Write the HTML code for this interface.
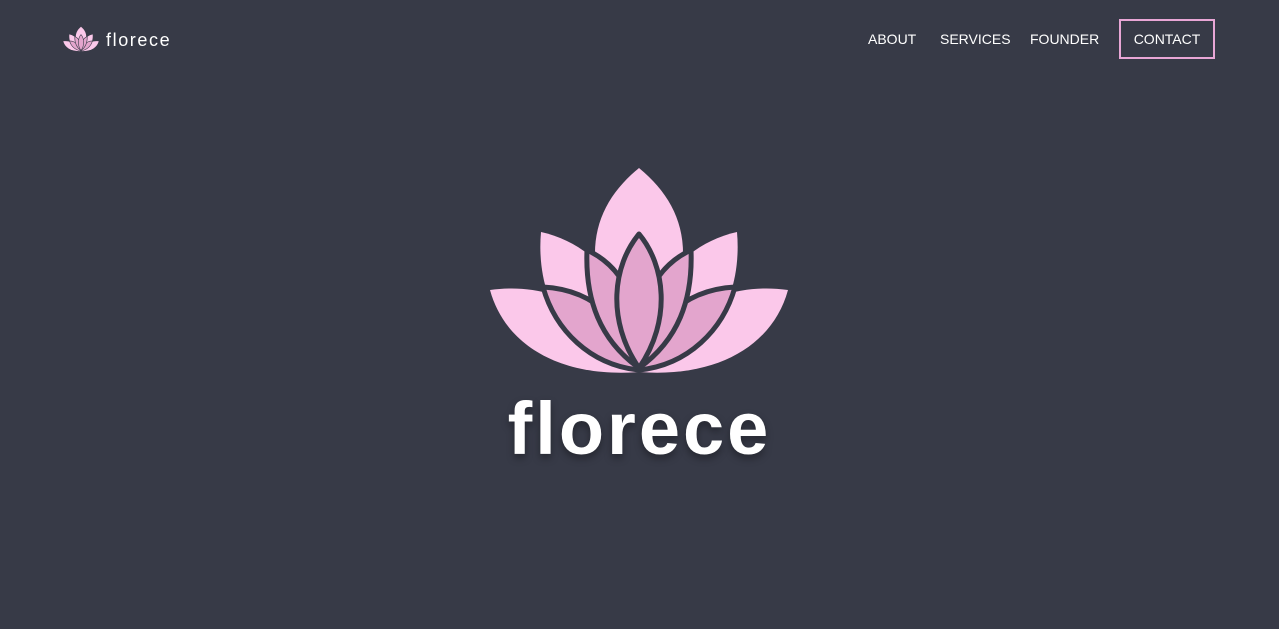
<!DOCTYPE html>
<html><head><meta charset="utf-8"><style>
html,body{margin:0;padding:0;width:1279px;height:629px;overflow:hidden;background:#373a47;font-family:"Liberation Sans",sans-serif;color:#fff}
.logo{position:absolute;left:63px;top:26px;display:flex;align-items:center}
.logo span{font-size:18px;letter-spacing:1.6px;margin-left:7px;margin-top:3px}
nav a{position:absolute;top:31px;font-size:14px;color:#fff;text-decoration:none}
.contact{position:absolute;left:1119px;top:19px;width:92px;height:36px;border:2px solid #e8a6d6;font-size:14px;text-align:center;line-height:37px}
.big{position:absolute;left:0;width:1279px;top:386px;text-align:center;font-size:74px;font-weight:bold;letter-spacing:3px;text-shadow:0 4px 8px rgba(0,0,0,.35)}
</style></head><body>
<svg width="0" height="0" style="position:absolute"><defs>
<g id="lotus">
<path fill="#fbc8ea" d="M639,168 C690,210 705,270 639,372 C573,270 588,210 639,168Z"/>
<path fill="#fbc8ea" d="M541,232 C600,245 640,300 639,372 C570,360 535,300 541,232Z"/>
<path fill="#fbc8ea" d="M737,232 C678,245 638,300 639,372 C708,360 743,300 737,232Z"/>
<path fill="#fbc8ea" d="M490,290 C560,280 620,320 639,372 C560,378 505,345 490,290Z"/>
<path fill="#fbc8ea" d="M788,290 C718,280 658,320 639,372 C718,378 773,345 788,290Z"/>
<g fill="#e3a5cd" stroke="#373a47" stroke-width="5" stroke-linejoin="round">
<path d="M543,287 C600,290 630,330 639,370 C590,365 555,330 543,287Z"/>
<path d="M735,287 C678,290 648,330 639,370 C688,365 723,330 735,287Z"/>
<path d="M587,250 C630,270 645,320 639,368 C600,340 585,300 587,250Z"/>
<path d="M691,250 C648,270 633,320 639,368 C678,340 693,300 691,250Z"/>
<path d="M639,234 C665,265 672,320 639,368 C606,320 613,265 639,234Z"/>
</g></g></defs></svg>
<div class="logo"><svg width="36" height="26" viewBox="488 166 302 210"><use href="#lotus"/></svg><span>florece</span></div>
<nav><a style="left:868px">ABOUT</a><a style="left:940px">SERVICES</a><a style="left:1030px">FOUNDER</a></nav>
<div class="contact">CONTACT</div>
<svg style="position:absolute;left:0;top:0" width="1279" height="629"><use href="#lotus"/></svg>
<div class="big">florece</div>
</body></html>
